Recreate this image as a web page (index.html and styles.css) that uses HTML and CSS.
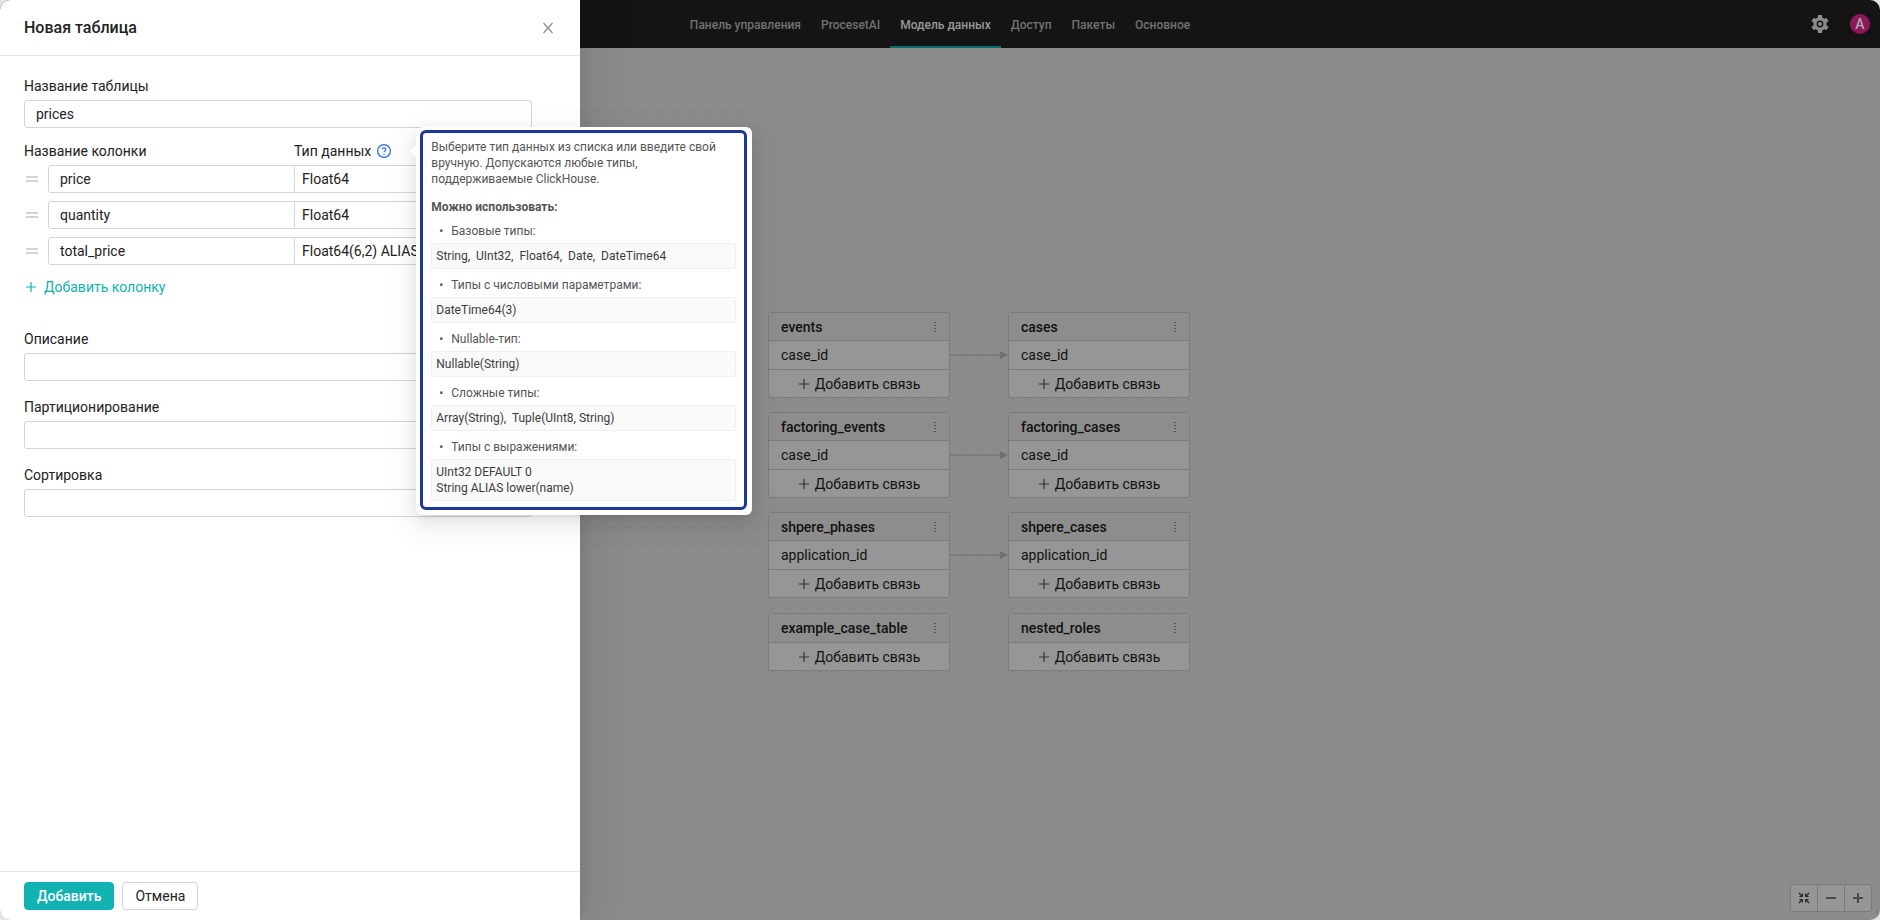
FILE: index.html
```html
<!DOCTYPE html>
<html lang="ru">
<head>
    <meta charset="UTF-8">
    <meta name="viewport" content="width=device-width, initial-scale=1.0">
    <title>Новая таблица</title>
    <link rel="stylesheet" href="styles.css">
</head>
<body>
    <svg class="sprite" aria-hidden="true">
        <symbol id="plus" viewBox="0 0 12 12"><path d="M6 1v10M1 6h10" fill="none" stroke="currentColor" stroke-width="1.2"/></symbol>
        <symbol id="dots" viewBox="0 0 4 12"><path d="M1 1h2v1H1zM1 4h2v1H1zM1 7h2v1H1zM1 10h2v1H1z" fill="currentColor"/></symbol>
        <symbol id="arrow" viewBox="0 0 58 10"><path d="M0 5h51" fill="none" stroke="currentColor"/><path d="M50 1l8 4-8 4z" fill="currentColor"/></symbol>
        <symbol id="handle" viewBox="0 0 12 6"><path d="M0 1h12M0 5h12" fill="none" stroke="currentColor" stroke-width="1.2"/></symbol>
    </svg>
    <div class="app">
        <header class="topbar">
            <nav class="menu">
                <a href="#">Панель управления</a>
                <a href="#">ProcesetAI</a>
                <a href="#" class="active">Модель данных</a>
                <a href="#">Доступ</a>
                <a href="#">Пакеты</a>
                <a href="#">Основное</a>
            </nav>
            <div class="user">
                <button type="button" class="gear" aria-label="Настройки">
                    <svg width="18" height="18" viewBox="0 0 18 18"><path fill="currentColor" fill-rule="evenodd" d="M7.2 0H10.8L11.4 2.7 13.2 3.8 15.6 2.9 17.4 6.1 15.4 7.9V10.1L17.4 11.9 15.6 15.1 13.2 14.2 11.4 15.3 10.8 18H7.2L6.6 15.3 4.8 14.2 2.4 15.1.6 11.9 2.6 10.1V7.9L.6 6.1 2.4 2.9 4.8 3.8 6.6 2.7zM9 5.6a3.4 3.4 0 1 0 0 6.8 3.4 3.4 0 0 0 0-6.8zm0 1.4a2 2 0 1 1 0 4 2 2 0 0 1 0-4z"/></svg>
                </button>
                <span class="avatar">A</span>
            </div>
        </header>

        <main class="canvas">
            <div class="nodes">
                <section class="node">
                    <h3>events <svg class="more"><use href="#dots"/></svg></h3>
                    <p>case_id <svg class="edge"><use href="#arrow"/></svg></p>
                    <button type="button"><svg><use href="#plus"/></svg>Добавить связь</button>
                </section>
                <section class="node">
                    <h3>cases <svg class="more"><use href="#dots"/></svg></h3>
                    <p>case_id</p>
                    <button type="button"><svg><use href="#plus"/></svg>Добавить связь</button>
                </section>
                <section class="node">
                    <h3>factoring_events <svg class="more"><use href="#dots"/></svg></h3>
                    <p>case_id <svg class="edge"><use href="#arrow"/></svg></p>
                    <button type="button"><svg><use href="#plus"/></svg>Добавить связь</button>
                </section>
                <section class="node">
                    <h3>factoring_cases <svg class="more"><use href="#dots"/></svg></h3>
                    <p>case_id</p>
                    <button type="button"><svg><use href="#plus"/></svg>Добавить связь</button>
                </section>
                <section class="node">
                    <h3>shpere_phases <svg class="more"><use href="#dots"/></svg></h3>
                    <p>application_id <svg class="edge"><use href="#arrow"/></svg></p>
                    <button type="button"><svg><use href="#plus"/></svg>Добавить связь</button>
                </section>
                <section class="node">
                    <h3>shpere_cases <svg class="more"><use href="#dots"/></svg></h3>
                    <p>application_id</p>
                    <button type="button"><svg><use href="#plus"/></svg>Добавить связь</button>
                </section>
                <section class="node empty">
                    <h3>example_case_table <svg class="more"><use href="#dots"/></svg></h3>
                    <button type="button"><svg><use href="#plus"/></svg>Добавить связь</button>
                </section>
                <section class="node empty">
                    <h3>nested_roles <svg class="more"><use href="#dots"/></svg></h3>
                    <button type="button"><svg><use href="#plus"/></svg>Добавить связь</button>
                </section>
            </div>
            <div class="zoom">
                <button type="button" aria-label="Вписать"><svg viewBox="0 0 12 12"><path d="M1 1l3 3M11 1L8 4M1 11l3-3M11 11L8 8" fill="none" stroke="#222" stroke-width="1.3"/><path d="M1.500 4.500h3v-3M10.500 4.500h-3v-3M1.500 7.500h3v3M10.500 7.500h-3v3" fill="none" stroke="#222"/></svg></button>
                <button type="button" aria-label="Уменьшить"><svg viewBox="0 0 12 12"><path d="M1 6h10" fill="none" stroke="currentColor" stroke-width="2"/></svg></button>
                <button type="button" aria-label="Увеличить"><svg viewBox="0 0 12 12"><path d="M6 1v10M1 6h10" fill="none" stroke="currentColor" stroke-width="2"/></svg></button>
            </div>
        </main>

        <form class="drawer">
            <div class="drawer-header">
                <h2>Новая таблица</h2>
                <button type="button" class="close" aria-label="Закрыть">
                    <svg viewBox="0 0 12 12"><path d="M1.500 1l9 10M10.500 1l-9 10" fill="none" stroke="currentColor" stroke-width="1.2"/></svg>
                </button>
            </div>

            <div class="drawer-body">
                <div class="field">
                    <label for="tableName">Название таблицы</label>
                    <input type="text" id="tableName" value="prices">
                </div>

                <div class="columns">
                    <div class="columns-head">
                        <span id="colName">Название колонки</span>
                        <span class="type-head"><span id="colType">Тип данных</span>
                            <span class="help">
                                <svg viewBox="0 0 14 14"><circle cx="7" cy="7" r="6.4" fill="none" stroke="currentColor" stroke-width="1.2"/><path d="M5.200 5.500a1.800 1.700 0 1 1 2.700 1.500c-.7.400-.9.700-.9 1.300" fill="none" stroke="currentColor" stroke-width="1.2"/><circle cx="7" cy="10.200" r=".7" fill="currentColor"/></svg>
                                <div class="popover" role="tooltip">
                                    <div class="popover-inner">
                                        <p>Выберите тип данных из списка или введите свой вручную. Допускаются любые типы, поддерживаемые ClickHouse.</p>
                                        <p class="strong">Можно использовать:</p>
                                        <ul>
                                            <li>Базовые типы:</li>
                                        </ul>
                                        <pre>String,  UInt32,  Float64,  Date,  DateTime64</pre>
                                        <ul>
                                            <li>Типы с числовыми параметрами:</li>
                                        </ul>
                                        <pre>DateTime64(3)</pre>
                                        <ul>
                                            <li>Nullable-тип:</li>
                                        </ul>
                                        <pre>Nullable(String)</pre>
                                        <ul>
                                            <li>Сложные типы:</li>
                                        </ul>
                                        <pre>Array(String),  Tuple(UInt8, String)</pre>
                                        <ul>
                                            <li>Типы с выражениями:</li>
                                        </ul>
                                        <pre>UInt32 DEFAULT 0
String ALIAS lower(name)</pre>
                                    </div>
                                </div>
                            </span>
                        </span>
                    </div>
                    <div class="column-row">
                        <svg class="handle"><use href="#handle"/></svg>
                        <input type="text" value="price" aria-labelledby="colName">
                        <input type="text" class="type" value="Float64" aria-labelledby="colType">
                    </div>
                    <div class="column-row">
                        <svg class="handle"><use href="#handle"/></svg>
                        <input type="text" value="quantity" aria-labelledby="colName">
                        <input type="text" class="type" value="Float64" aria-labelledby="colType">
                    </div>
                    <div class="column-row">
                        <svg class="handle"><use href="#handle"/></svg>
                        <input type="text" value="total_price" aria-labelledby="colName">
                        <input type="text" class="type" value="Float64(6,2) ALIAS price * quantity" aria-labelledby="colType">
                    </div>
                    <button type="button" class="add-column"><svg><use href="#plus"/></svg>Добавить колонку</button>
                </div>

                <div class="field">
                    <label for="description">Описание</label>
                    <input type="text" id="description">
                </div>
                <div class="field">
                    <label for="partition">Партиционирование</label>
                    <input type="text" id="partition">
                </div>
                <div class="field">
                    <label for="sorting">Сортировка</label>
                    <input type="text" id="sorting">
                </div>
            </div>

            <div class="drawer-footer">
                <button type="submit" class="btn primary">Добавить</button>
                <button type="button" class="btn">Отмена</button>
            </div>
        </form>
    </div>
</body>
</html>
```

FILE: styles.css
```css
* {
    box-sizing: border-box;
}
body {
    margin: 0;
    background: #e4e4e8;
    color: #222;
    font-family: Roboto, "Liberation Sans", sans-serif;
    font-size: 14px;
    line-height: 20px;
}
button, input {
    font: inherit;
    color: inherit;
}
button {
    padding: 0;
    border: none;
    background: none;
    cursor: pointer;
}
h2, h3, p, ul, pre {
    margin: 0;
    padding: 0;
    font: inherit;
}
.sprite {
    position: absolute;
    width: 0;
    height: 0;
}
.app {
    position: relative;
    display: flex;
    flex-direction: column;
    min-height: 100vh;
    border-radius: 10px;
    overflow: hidden;
}

/* top bar */
.topbar {
    display: grid;
    grid-template-columns: 1fr auto 1fr;
    height: 48px;
    background: #141414;
}
.menu {
    grid-column: 2;
    display: flex;
}
.menu a {
    display: flex;
    align-items: center;
    padding: 4px 10px 0;
    border-bottom: 2px solid transparent;
    color: #727272;
    font-size: 12px;
    font-weight: 500;
    text-decoration: none;
}
.menu a.active {
    color: #999;
    border-color: #086c6c;
}
.user {
    display: flex;
    align-items: center;
    justify-content: flex-end;
    gap: 21px;
    padding-right: 10px;
}
.gear {
    display: flex;
    color: #8c8c8c;
}
.avatar {
    width: 20px;
    height: 20px;
    border-radius: 50%;
    background: #8e1759;
    color: #aaa;
    font-size: 14px;
    font-weight: 500;
    text-align: center;
}

/* data model canvas */
.canvas {
    position: relative;
    flex: 1;
    background-color: #8c8c8c;
    background-image: radial-gradient(circle at 8px 8px, #7c7c7c 1px, transparent 1px);
    background-size: 16px 16px;
    background-position: -3px -8px;
}
.nodes {
    position: absolute;
    top: 264px;
    left: 768px;
    display: grid;
    grid-template-columns: 182px 182px;
    gap: 14px 58px;
}
.node {
    border: 1px solid #7b7b7b;
    border-radius: 3px;
    background: #969696;
    color: #111;
}
.node h3 {
    display: flex;
    align-items: center;
    justify-content: space-between;
    height: 28px;
    padding: 0 12px;
    border-bottom: 1px solid #7b7b7b;
    background: #8d8d8d;
    font-weight: 500;
}
.node.empty {
    margin-top: 1px;
}
.node.empty h3 {
    height: 29px;
}
.node p {
    position: relative;
    height: 29px;
    padding: 4px 12px;
    border-bottom: 1px solid #7b7b7b;
}
.node button {
    display: flex;
    align-items: center;
    justify-content: center;
    gap: 5px;
    width: 100%;
    height: 27px;
}
.node button svg {
    width: 12px;
    height: 12px;
    color: #333;
}
.node .more {
    width: 4px;
    height: 12px;
    color: #555;
}
.node .edge {
    position: absolute;
    left: 181px;
    top: 9px;
    width: 58px;
    height: 10px;
    color: #6e6e6e;
}
.zoom {
    position: absolute;
    right: 8px;
    bottom: 8px;
    display: flex;
    border: 1px solid #7b7b7b;
    border-radius: 3px;
    background: #969696;
    color: #4c4c4c;
}
.zoom button {
    display: flex;
    align-items: center;
    justify-content: center;
    width: 26px;
    height: 26px;
}
.zoom button + button {
    width: 27px;
    border-left: 1px solid #7b7b7b;
}
.zoom svg {
    width: 12px;
    height: 12px;
}

/* drawer */
.drawer {
    position: absolute;
    top: 0;
    bottom: 0;
    left: 0;
    display: flex;
    flex-direction: column;
    width: 580px;
    background: #fff;
    box-shadow: 6px 0 16px -8px rgba(0, 0, 0, .08), 9px 0 28px rgba(0, 0, 0, .05), 12px 0 48px 16px rgba(0, 0, 0, .03);
}
.drawer-header {
    display: flex;
    align-items: center;
    justify-content: space-between;
    height: 56px;
    padding: 0 26px 0 24px;
    border-bottom: 1px solid #e4e4e4;
}
.drawer-header h2 {
    font-size: 16px;
    font-weight: 500;
}
.close {
    display: flex;
    color: #8c8c8c;
}
.close svg {
    width: 12px;
    height: 12px;
}
.drawer-body {
    flex: 1;
    padding: 20px 48px 20px 24px;
}
.field label {
    display: block;
    margin-bottom: 4px;
}
.field + .field {
    margin-top: 16px;
}
input {
    display: block;
    width: 100%;
    height: 28px;
    padding: 0 11px;
    border: 1px solid #d4d4d4;
    border-radius: 3px;
    background: #fff;
    outline: none;
}
.columns {
    display: flex;
    flex-direction: column;
    gap: 8px;
    margin: 13px 0 28px;
}
.columns-head {
    display: grid;
    grid-template-columns: 270px 1fr;
    margin-bottom: -4px;
}
.type-head {
    display: flex;
    align-items: center;
    gap: 6px;
}
.column-row {
    display: grid;
    grid-template-columns: 24px 247px 1fr;
    align-items: center;
}
.column-row input {
    border-radius: 3px 0 0 3px;
}
.column-row .type {
    width: auto;
    margin-left: -1px;
    padding: 0 7px;
    border-radius: 0 3px 3px 0;
}
.handle {
    width: 12px;
    height: 6px;
    margin-left: 2px;
    color: #a8a8a8;
}
.add-column {
    display: flex;
    align-items: center;
    gap: 7px;
    align-self: flex-start;
    height: 28px;
    padding-left: 1px;
    color: #10b0b0;
}
.add-column svg {
    width: 12px;
    height: 12px;
}
.drawer-footer {
    display: flex;
    gap: 8px;
    padding: 10px 24px;
    border-top: 1px solid #e4e4e4;
}
.btn {
    height: 28px;
    padding: 0 12px;
    border: 1px solid #d4d4d4;
    border-radius: 4px;
    background: #fff;
}
.btn.primary {
    border-color: #10b2b2;
    background: #10b2b2;
    color: #fff;
    font-weight: 500;
}

/* data type hint */
.help {
    position: relative;
    display: flex;
    color: #2468e0;
}
.help > svg {
    width: 14px;
    height: 14px;
}
.popover {
    position: absolute;
    z-index: 1;
    top: -17px;
    left: 39px;
    width: 336px;
    padding: 3px 5px 5px 4px;
    border-radius: 6px;
    background: #fff;
    box-shadow: 0 6px 16px rgba(0, 0, 0, .08), 0 3px 6px -4px rgba(0, 0, 0, .12), 0 9px 28px 8px rgba(0, 0, 0, .05);
    color: #555;
    font-size: 12px;
    line-height: 16px;
}
.popover::before {
    content: "";
    position: absolute;
    top: 19px;
    left: -4px;
    width: 10px;
    height: 10px;
    background: #fff;
    transform: rotate(45deg);
}
.popover-inner {
    position: relative;
    padding: 6px 8px;
    border: 3px solid #1f369b;
    border-radius: 6px;
    background: #fff;
}
.popover .strong {
    margin: 12px 0 8px;
    font-weight: 700;
}
.popover ul {
    margin-bottom: 4px;
    list-style: none;
}
.popover li {
    display: flex;
    padding-left: 8px;
}
.popover li::before {
    content: "•";
    width: 12px;
    font-size: 12px;
}
.popover pre {
    margin-bottom: 8px;
    padding: 4px;
    border: 1px solid #eee;
    border-radius: 3px;
    background: #fafafa;
    color: #3c3c3c;
    white-space: pre-wrap;
}
.popover pre:last-child {
    margin-bottom: 0;
}
```
